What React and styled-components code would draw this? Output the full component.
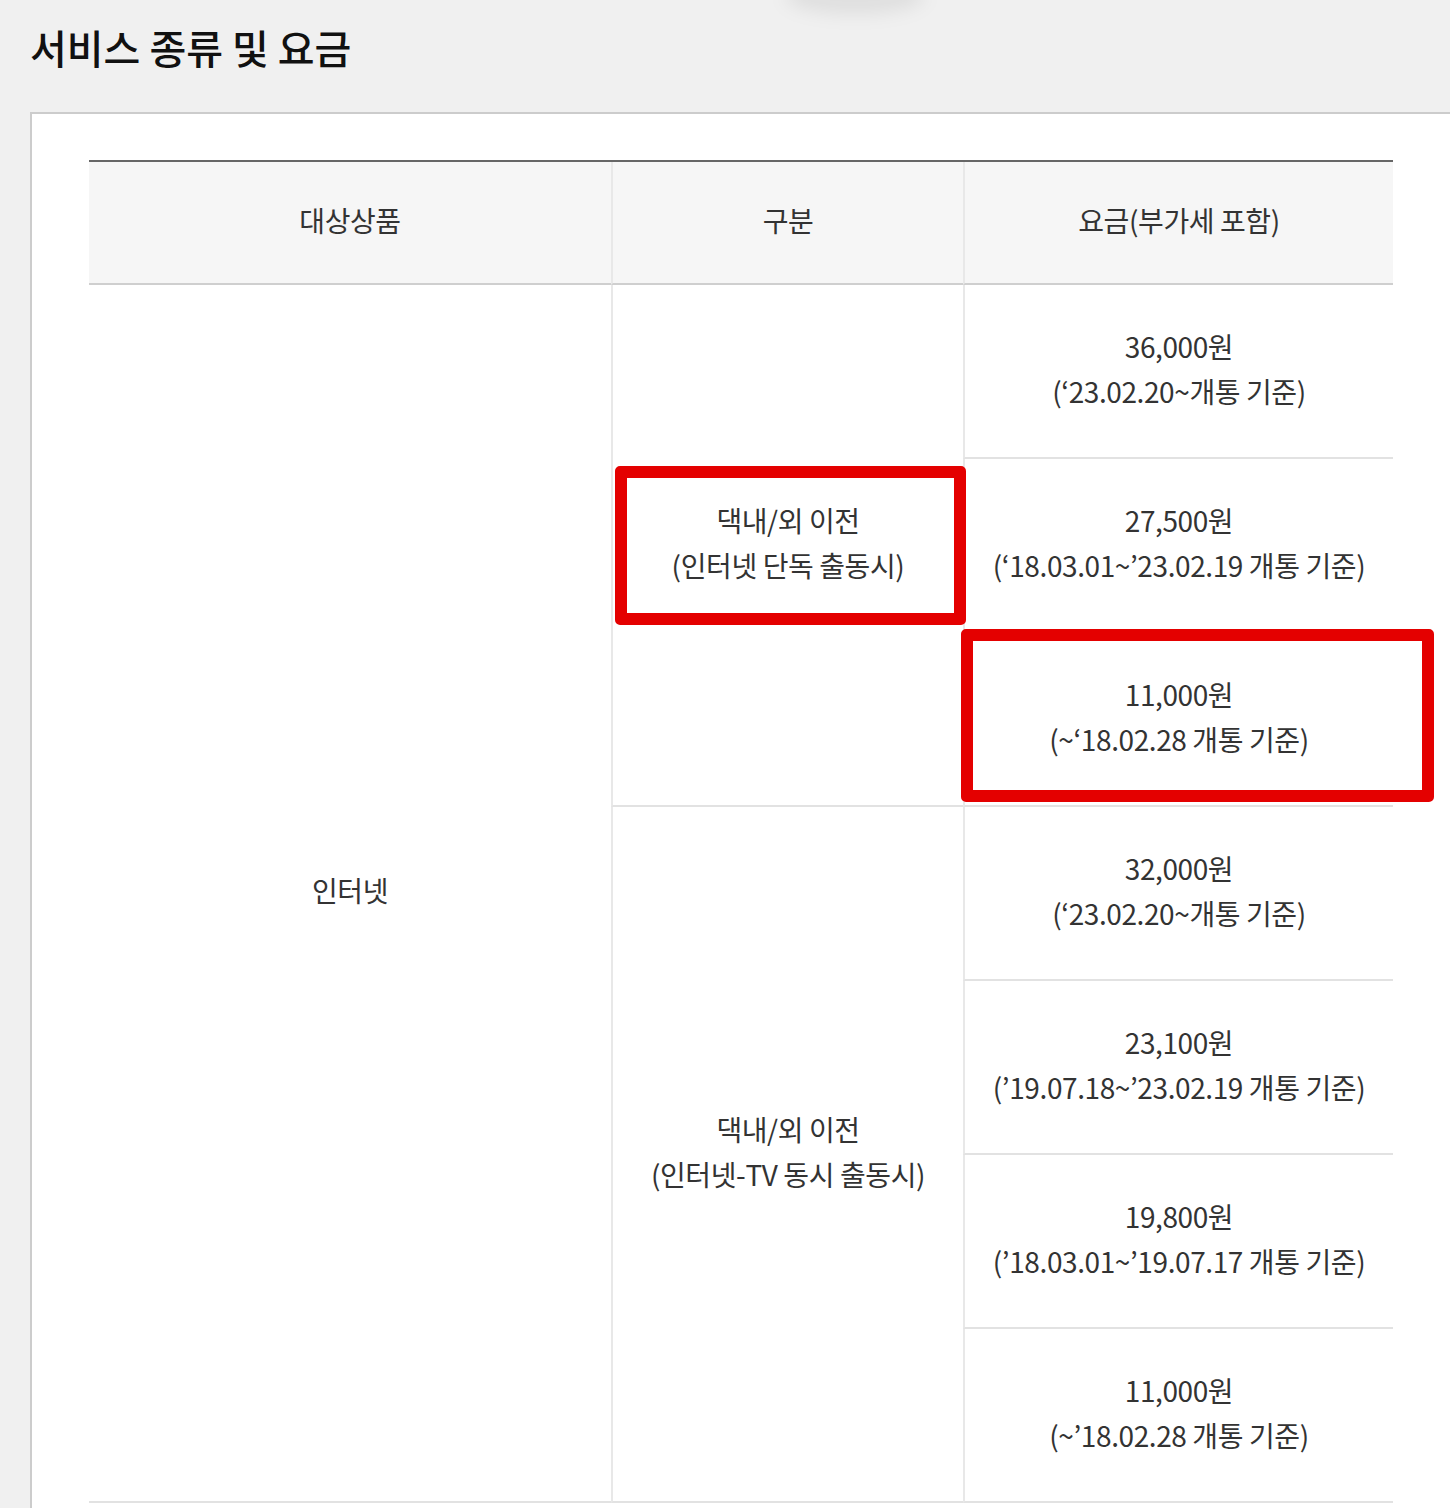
import React from "react";
import styled, { createGlobalStyle } from "styled-components";

const GlobalStyle = createGlobalStyle`
  html, body {
    margin: 0;
    padding: 0;
    background: #f0f0f0;
    overflow-x: hidden;
  }
  body {
    font-family: "Noto Sans CJK KR", "Noto Sans", sans-serif;
    color: #333;
  }
`;

const Page = styled.div`
  position: relative;
  width: 1450px;
  height: 1508px;
  overflow: hidden;
`;

const TopShadow = styled.div`
  position: absolute;
  left: 785px;
  top: -22px;
  width: 140px;
  height: 36px;
  border-radius: 50%;
  background: rgba(0, 0, 0, 0.07);
  filter: blur(9px);
`;

const Title = styled.h2`
  margin: 0;
  padding: 19px 0 0 30px;
  height: 112px;
  box-sizing: border-box;
  font-size: 40px;
  line-height: 56px;
  font-weight: 500;
  letter-spacing: 0;
  color: #111;
`;

const Panel = styled.section`
  margin-left: 30px;
  width: 1422px;
  box-sizing: border-box;
  background: #fff;
  border: 2px solid #ccc;
  padding: 46px 57px 80px 57px;
`;

const TableWrap = styled.div`
  position: relative;
  width: 1304px;
`;

const Grid = styled.div`
  display: grid;
  grid-template-columns: 522px 352px 430px;
  grid-template-rows: 123px repeat(7, 174px);
  border-top: 2px solid #666;
`;

const Cell = styled.div`
  box-sizing: border-box;
  display: flex;
  flex-direction: column;
  align-items: center;
  justify-content: center;
  padding-bottom: 5px;
  text-align: center;
  font-size: 28px;
  line-height: 45px;
  letter-spacing: -0.4px;
  color: #333;
  grid-column: ${(p) => p.$col};
  grid-row: ${(p) => p.$row};
  border-left: ${(p) => (p.$col > 1 ? "2px solid #e8e8e8" : "none")};
  border-bottom: 2px solid ${(p) => (p.$head ? "#cfcfcf" : "#e2e2e2")};
  background: ${(p) => (p.$head ? "#f6f6f6" : "#fff")};
`;

const Line = styled.span`
  display: block;
  white-space: nowrap;
`;

const Highlight = styled.div`
  position: absolute;
  box-sizing: border-box;
  border: 12px solid #e40000;
  border-radius: 5px;
  pointer-events: none;
  left: ${(p) => p.$x}px;
  top: ${(p) => p.$y}px;
  width: ${(p) => p.$w}px;
  height: ${(p) => p.$h}px;
`;

const prices = [
  ["36,000원", "(‘23.02.20~개통 기준)"],
  ["27,500원", "(‘18.03.01~’23.02.19 개통 기준)"],
  ["11,000원", "(~‘18.02.28 개통 기준)"],
  ["32,000원", "(‘23.02.20~개통 기준)"],
  ["23,100원", "(’19.07.18~’23.02.19 개통 기준)"],
  ["19,800원", "(’18.03.01~’19.07.17 개통 기준)"],
  ["11,000원", "(~’18.02.28 개통 기준)"],
];

export default function App() {
  return (
    <Page>
      <GlobalStyle />
      <TopShadow />
      <Title>서비스 종류 및 요금</Title>
      <Panel>
        <TableWrap>
          <Grid>
            <Cell $head $col={1} $row={1}>대상상품</Cell>
            <Cell $head $col={2} $row={1}>구분</Cell>
            <Cell $head $col={3} $row={1}>요금(부가세 포함)</Cell>

            <Cell $col={1} $row="2 / span 7">인터넷</Cell>
            <Cell $col={2} $row="2 / span 3">
              <Line>댁내/외 이전</Line>
              <Line>(인터넷 단독 출동시)</Line>
            </Cell>
            <Cell $col={2} $row="5 / span 4">
              <Line>댁내/외 이전</Line>
              <Line>(인터넷-TV 동시 출동시)</Line>
            </Cell>
            {prices.map(([a, b], i) => (
              <Cell key={i} $col={3} $row={i + 2}>
                <Line>{a}</Line>
                <Line>{b}</Line>
              </Cell>
            ))}
          </Grid>
          <Highlight $x={526} $y={306} $w={351} $h={159} />
          <Highlight $x={872} $y={469} $w={473} $h={173} />
        </TableWrap>
      </Panel>
    </Page>
  );
}
